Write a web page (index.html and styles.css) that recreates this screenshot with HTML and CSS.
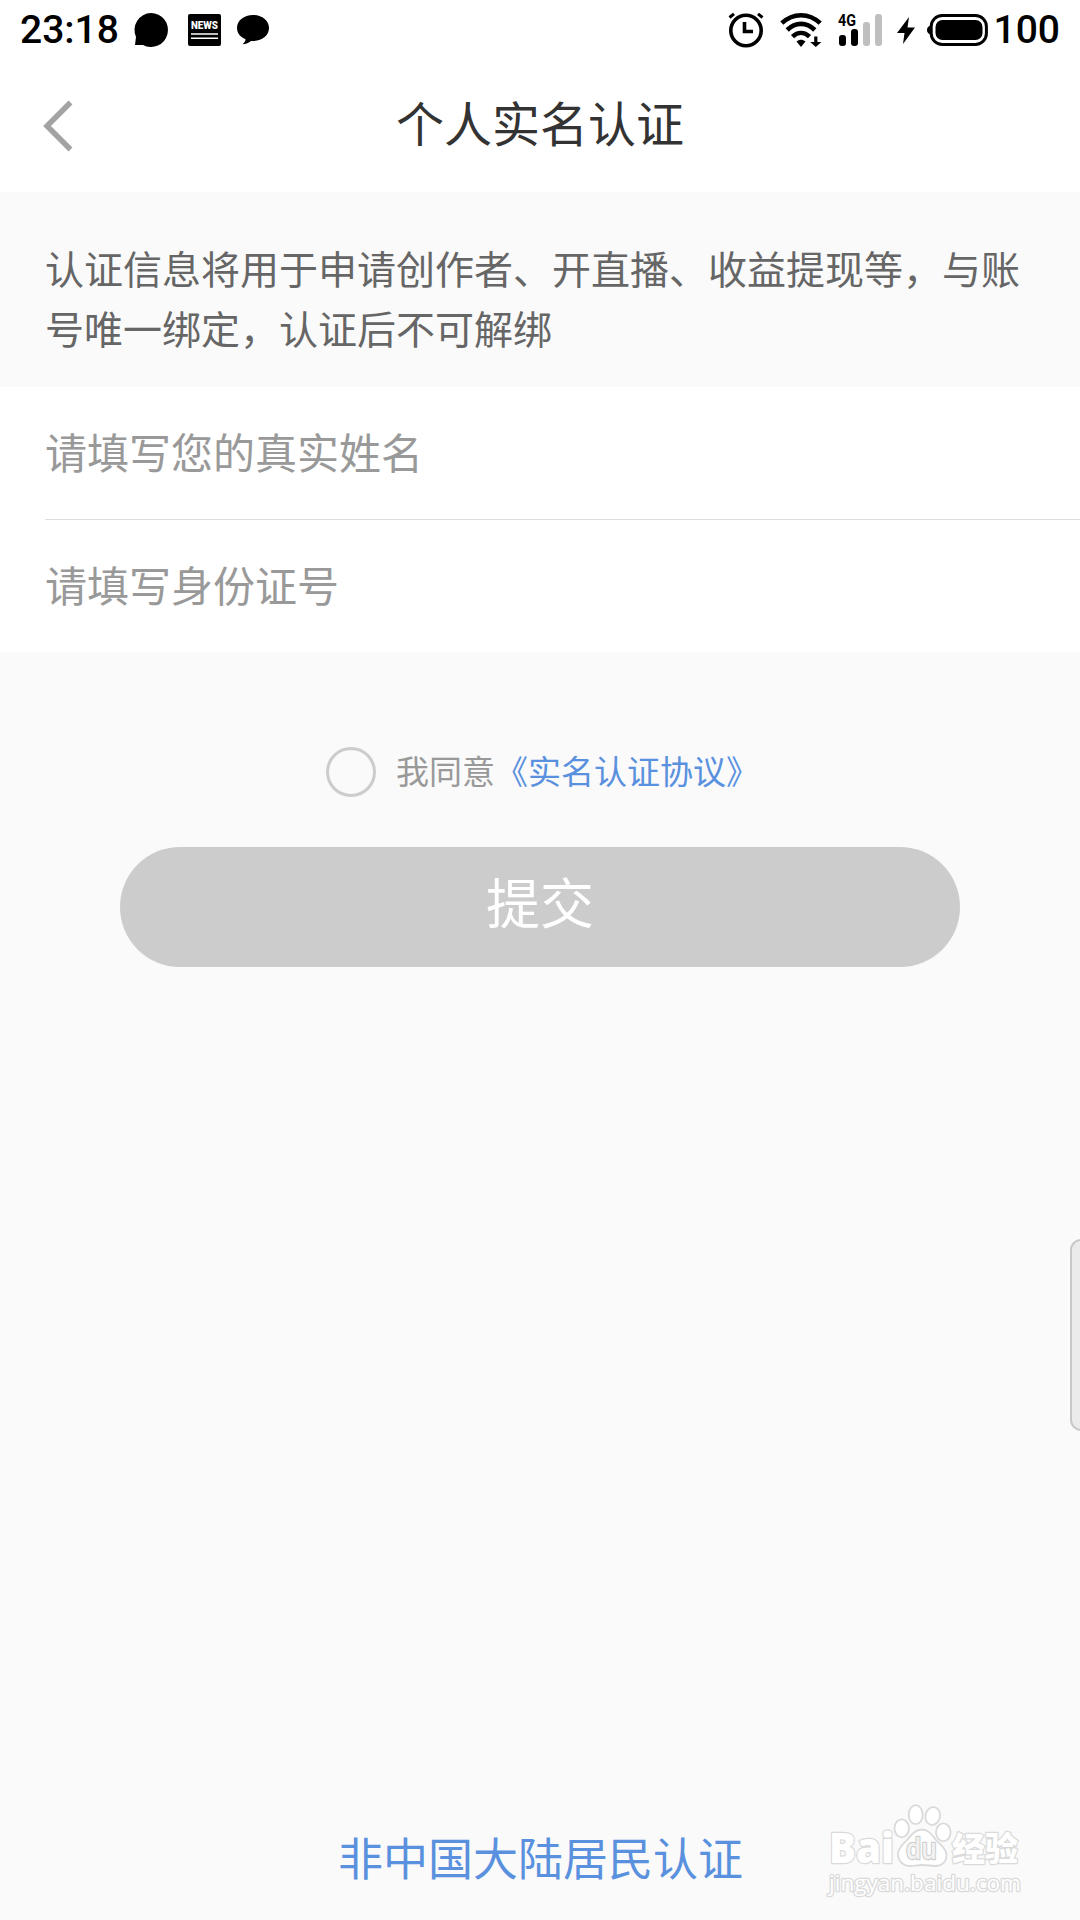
FILE: index.html
```html
<!DOCTYPE html>
<html lang="zh-CN">
  <head>
    <meta charset="UTF-8" />
    <title>个人实名认证</title>
    <link rel="stylesheet" href="styles.css">
  </head>
  <body>
    <div class="status-bar">
      <span class="time">23:18</span>
      <svg class="icon-chat" width="36" height="36" viewBox="0 0 36 36">
        <path d="M18 1a17 17 0 1 1-8 32H2l1-8A17 17 0 0 1 18 1z" />
      </svg>
      <svg class="icon-news" width="33" height="32" viewBox="0 0 33 32">
        <rect width="33" height="32" rx="2" />
        <text x="3" y="15" textLength="27" lengthAdjust="spacingAndGlyphs">NEWS</text>
        <path d="M3 20h27M3 24.300h27" stroke="#fff" stroke-width="1.600" />
      </svg>
      <svg class="icon-bubble" width="32" height="30" viewBox="0 0 32 30">
        <path d="M16 0c9 0 16 5.500 16 13S25 26 16 26l-2 0c-3 2.500-5.500 3-8.500 3.200 2-1.700 3-3.200 3-5C3.200 22 0 18 0 13 0 5.500 7 0 16 0z" />
      </svg>

      <div class="status-right">
        <svg class="icon-alarm" width="36" height="36" viewBox="0 0 36 36">
          <g fill="none" stroke="#000">
            <circle cx="18" cy="18.500" r="15.200" stroke-width="3.600" />
            <path d="M16.500 10v9.500h8.500" stroke-width="3.600" />
            <path d="M1.500 5.500 6 1.800M30 1.800 34.500 5.500" stroke-width="3" />
          </g>
        </svg>
        <svg class="icon-wifi" width="44" height="34" viewBox="0 0 44 34">
          <g fill="none" stroke="#000" stroke-width="4.600">
            <path d="M1.800 10.200C13-.5 29-.5 40.200 10.200" />
            <path d="M7.200 17C15.500 8.800 26.500 8.800 34.800 17" />
            <path d="M12.500 23.600c5.200-4.900 11.800-4.900 17 0" />
          </g>
          <path d="M16.500 28.500c3-2.300 6-2.300 9 0L21 34z" />
          <path d="M34.200 23.500h3.200v5.500h4L35.800 34l-5.600-5h4z" />
        </svg>
        <svg class="icon-signal" width="44" height="32" viewBox="0 0 44 32">
          <text x="0" y="12" textLength="18" lengthAdjust="spacingAndGlyphs">4G</text>
          <rect x="1" y="21" width="7" height="11" rx="3" />
          <rect x="13" y="15" width="7" height="17" rx="3" />
          <rect x="25" y="8" width="7" height="24" rx="3" fill="#bfbfbf" />
          <rect x="37" y="0" width="7" height="32" rx="3" fill="#bfbfbf" />
        </svg>
        <svg class="icon-bolt" width="18" height="27" viewBox="0 0 18 27">
          <path d="M12 0 0 16h7.500L6 27 18 10.500h-7.500z" />
        </svg>
        <svg class="icon-battery" width="61" height="32" viewBox="0 0 61 32">
          <path d="M4 11.500C1.500 12 0 13.500 0 16s1.500 4 4 4.500z" />
          <rect x="4.200" y="1.500" width="55.200" height="29" rx="11" fill="none" stroke="#000" stroke-width="3" />
          <rect x="8.500" y="6" width="47" height="20" rx="7" />
        </svg>
        <span class="battery-level">100</span>
      </div>
    </div>

    <header class="header">
      <svg class="back" width="30" height="50" viewBox="0 0 30 50">
        <path d="M27.500 1.500 4 25l23.500 23.500" fill="none" stroke="#a3a3a3" stroke-width="5.500" />
      </svg>
      <h1>个人实名认证</h1>
    </header>

    <p class="notice">认证信息将用于申请创作者、开直播、收益提现等，与账号唯一绑定，认证后不可解绑</p>

    <div class="form">
      <div class="field">请填写您的真实姓名</div>
      <div class="field">请填写身份证号</div>
    </div>

    <main>
      <div class="agreement">
        <span class="radio"></span>
        <span class="agreement-text">我同意<a>《实名认证协议》</a></span>
      </div>
      <button class="submit">提交</button>
    </main>

    <footer><a>非中国大陆居民认证</a></footer>

    <div class="side-handle"></div>

    <svg class="watermark" width="220" height="100" viewBox="0 0 220 100">
      <text class="wm-logo" x="9" y="63" textLength="65" lengthAdjust="spacingAndGlyphs">Bai</text>
      <g class="paw">
        <ellipse cx="81.700" cy="28.300" rx="7.300" ry="9" />
        <ellipse cx="95.700" cy="14.700" rx="7" ry="9.500" />
        <ellipse cx="112.700" cy="16" rx="7.300" ry="9" transform="rotate(12 112.700 16)" />
        <ellipse cx="123.300" cy="32.300" rx="7.300" ry="9" />
        <path d="M102 29.500c7 0 10 6 14 10.500s10.500 8 10.500 15-5 11-11 11c-5 0-8-1-13.500-1s-7 1-12 1c-7 0-12-5-12-12 0-6 5-9.500 9-14s8-10.500 15-10.500z" />
      </g>
      <text class="wm-du" x="86" y="59" textLength="31" lengthAdjust="spacingAndGlyphs">du</text>
      <text class="wm-cn" x="132" y="61">经验</text>
      <text class="wm-url" x="9" y="91" textLength="192" lengthAdjust="spacingAndGlyphs">jingyan.baidu.com</text>
    </svg>
  </body>
</html>
```
FILE: styles.css
```css
* {
  box-sizing: border-box;
}

body {
  position: relative;
  display: flex;
  flex-direction: column;
  margin: 0;
  height: 1920px;
  overflow: hidden;
  background: #fafafa;
  font-family: "Noto Sans CJK SC", sans-serif;
}

svg {
  display: block;
  flex-shrink: 0;
  overflow: visible;
}

/* Status bar */
.status-bar {
  display: flex;
  align-items: center;
  height: 60px;
  padding: 0 20px;
  background: #fff;
  font-family: Roboto, sans-serif;
  font-size: 39px;
  font-weight: 500;
  line-height: 60px;
}

.time {
  width: 113px;
}

.icon-news {
  margin-left: 19px;
}

.icon-bubble {
  margin-left: 16px;
}

.icon-news text {
  fill: #fff;
  font: 900 10px Roboto, sans-serif;
}

.status-right {
  display: flex;
  align-items: center;
  margin-left: auto;
}

.icon-wifi {
  margin-left: 16px;
}

.icon-signal {
  margin-left: 14px;
}

.icon-signal text {
  font: 700 16px Roboto, sans-serif;
}

.icon-bolt {
  margin-left: 15px;
}

.icon-battery {
  margin-left: 12px;
}

.battery-level {
  margin-left: 6px;
}

/* Header */
.header {
  position: relative;
  display: flex;
  align-items: center;
  justify-content: center;
  height: 132px;
  padding-bottom: 10px;
  background: #fff;
}

.back {
  position: absolute;
  left: 43px;
  top: 41px;
}

h1 {
  margin: 0;
  color: #333;
  font-size: 48px;
  font-weight: 400;
}

.notice {
  height: 195px;
  margin: 0;
  padding: 45px 45px 0;
  color: #666;
  font-size: 39px;
  line-height: 60px;
}

/* Form */
.form {
  background: #fff;
}

.field {
  height: 132px;
  margin-left: 45px;
  color: #999;
  font-size: 42px;
  line-height: 127px;
}

.field:first-child {
  height: 133px;
  border-bottom: 1px solid #dedede;
}

main {
  display: flex;
  flex-direction: column;
  align-items: center;
  padding-top: 95px;
}

.agreement {
  display: flex;
  align-items: center;
  gap: 20px;
  height: 50px;
  margin-left: 5px;
  color: #999;
  font-size: 33px;
}

.agreement-text {
  padding-bottom: 4px;
}

.radio {
  width: 50px;
  height: 50px;
  border: 3px solid #ccc;
  border-radius: 50%;
}

a {
  color: #5a91de;
}

.submit {
  width: 840px;
  height: 120px;
  margin-top: 50px;
  padding: 0 0 13px;
  border: none;
  border-radius: 60px;
  background: #ccc;
  color: #fff;
  font-family: inherit;
  font-size: 54px;
}

footer {
  margin-top: auto;
  padding: 0 0 30px 1px;
  text-align: center;
  font-size: 45px;
  line-height: 66px;
}

.side-handle {
  position: absolute;
  right: -12px;
  top: 1239px;
  width: 22px;
  height: 192px;
  border: 2px solid #c8c8c8;
  border-radius: 12px;
  background: #ebebeb;
}

/* Watermark */
.watermark {
  position: absolute;
  left: 820px;
  top: 1800px;
  fill: #fff;
  stroke: #dadada;
  stroke-width: 2.5px;
}

.watermark text {
  paint-order: stroke;
  stroke-linejoin: round;
}

.wm-logo {
  font: 800 42px "Open Sans", sans-serif;
}

.paw {
  stroke-width: 1.8px;
}

.watermark .wm-du {
  font: 600 28px "Open Sans", sans-serif;
  fill: #f2f2f2;
  stroke: #cfcfcf;
}

.wm-cn {
  font: 900 33px "Noto Sans CJK SC", sans-serif;
}

.wm-url {
  font: 400 21px "Open Sans", sans-serif;
}
```
